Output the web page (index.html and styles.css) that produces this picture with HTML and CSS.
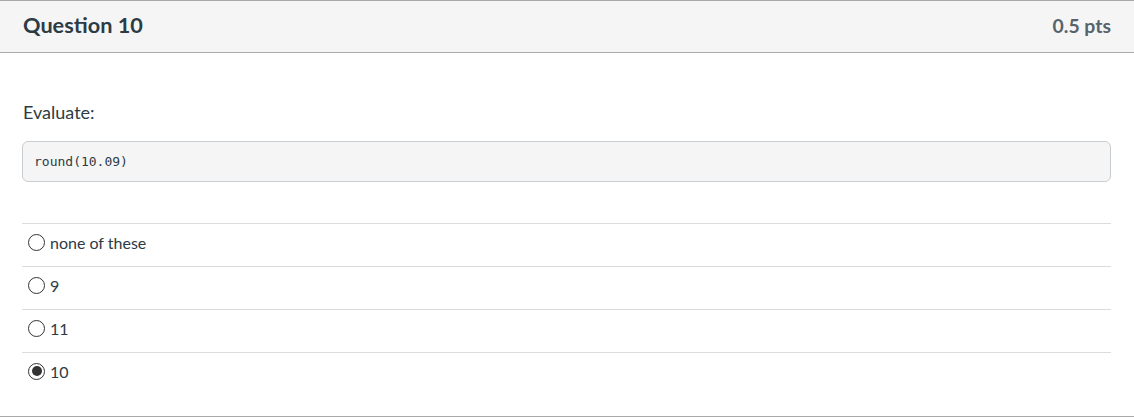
FILE: index.html
```html
<!DOCTYPE html>
<html>
<head>
<meta charset="utf-8">
<link rel="stylesheet" href="styles.css">
</head>
<body>
<div class="question">
  <div class="q-header">
    <span class="q-title">Question 10</span>
    <span class="q-points">0.5 pts</span>
  </div>
  <div class="q-body">
    <p class="q-text">Evaluate:</p>
    <pre class="code">round(10.09)</pre>
    <div class="answers">
      <label class="answer"><span class="radio"></span><span class="label">none of these</span></label>
      <label class="answer"><span class="radio"></span><span class="label">9</span></label>
      <label class="answer"><span class="radio"></span><span class="label">11</span></label>
      <label class="answer"><span class="radio checked"></span><span class="label">10</span></label>
    </div>
  </div>
</div>
</body>
</html>
```
FILE: styles.css
```css
* { box-sizing: border-box; }
body {
  margin: 0;
  background: #fff;
  font-family: Lato, "Liberation Sans", sans-serif;
  color: #2d3b45;
}
.question {
  border-top: 1px solid #a9a9a9;
  border-bottom: 1px solid #a9a9a9;
  height: 417px;
}
.q-header {
  display: flex;
  justify-content: space-between;
  align-items: center;
  height: 52px;
  padding: 0 23px 3px 23px;
  background: #f5f5f5;
  border-bottom: 1px solid #a9a9a9;
}
.q-title {
  font-size: 21.7px;
  font-weight: 700;
  color: #2d3b45;
}
.q-points {
  font-size: 19.4px;
  font-weight: 700;
  color: #57636b;
}
.q-body {
  padding: 47px 23px 0 22px;
}
.q-text {
  margin: 0 0 17px 1px;
  font-size: 18px;
  line-height: 24px;
}
.code {
  margin: 0;
  height: 41px;
  padding: 0 11px;
  display: flex;
  align-items: center;
  background: #f5f5f5;
  border: 1px solid #c7cdd1;
  border-radius: 6px;
  font-family: "DejaVu Sans Mono", monospace;
  font-size: 13px;
  color: #2d3b45;
}
.answers {
  margin-top: 41px;
}
.answer {
  display: flex;
  align-items: center;
  height: 43px;
  border-top: 1px solid #dcdcdc;
  padding: 0 0 5px 6px;
  font-size: 16px;
}
.answer:last-child { height: 42px; }
.radio {
  width: 17px;
  height: 17px;
  border: 1.5px solid #333;
  border-radius: 50%;
  margin-right: 5px;
  display: flex;
  align-items: center;
  justify-content: center;
}
.radio.checked::after {
  content: "";
  width: 10px;
  height: 10px;
  border-radius: 50%;
  background: #333;
}
.label { color: #2d3b45; }
```
